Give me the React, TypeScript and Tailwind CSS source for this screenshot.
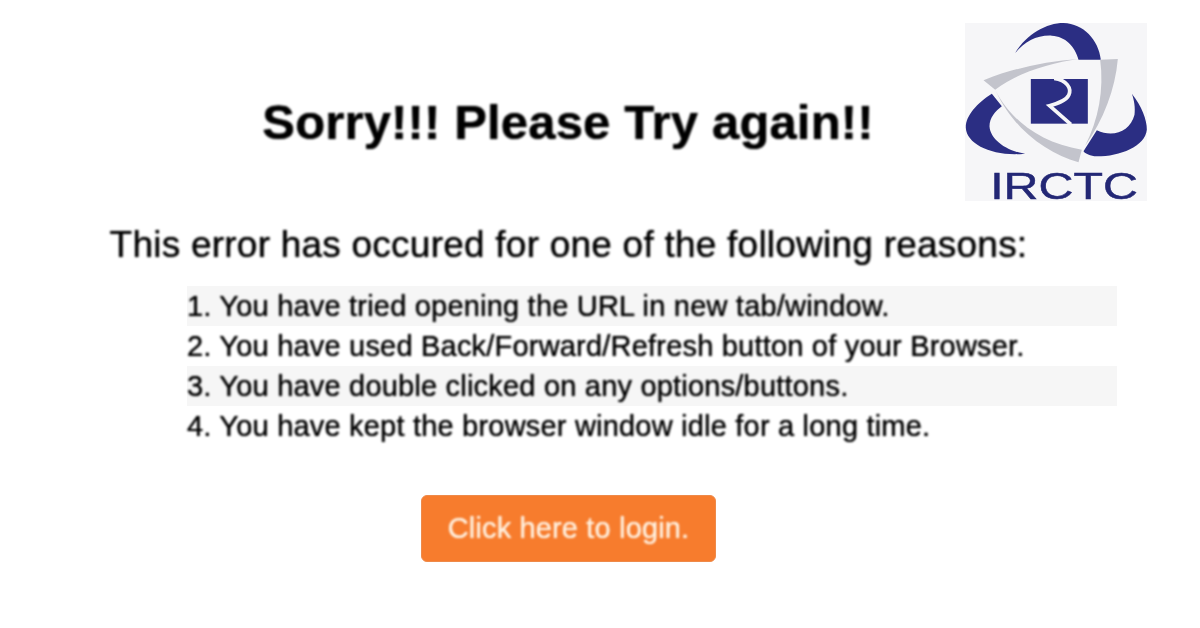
const reasons = [
  "You have tried opening the URL in new tab/window.",
  "You have used Back/Forward/Refresh button of your Browser.",
  "You have double clicked on any options/buttons.",
  "You have kept the browser window idle for a long time.",
];

function IrctcLogo() {
  return (
    <div className="absolute left-[965px] top-[23px] h-[178px] w-[182px] bg-[#f6f6f8]">
      <svg viewBox="45 40 545 534" className="h-[178px] w-[182px] overflow-visible blur-[0.4px]">
        <path d="M195 130C230 72 290 40 340 40C400 42 445 90 452 150L385 150C375 110 345 80 305 78C260 76 225 95 195 130Z" fill="#2b2e83" />
        <path d="M125 252C80 280 45 320 47 355C50 405 130 442 225 432C170 425 120 390 118 350C118 325 135 305 155 290Z" fill="#2b2e83" />
        <path d="M545 252C575 290 590 330 590 360C585 410 510 440 440 440C420 440 405 432 400 425L440 362C490 385 540 365 553 315C556 295 552 270 545 252Z" fill="#2b2e83" />
        <path d="M100 212C190 175 290 155 385 148C300 160 200 190 135 240Z" fill="#c3c4cc" />
        <path d="M450 150L503 148C495 240 460 330 405 408C445 330 462 240 450 150Z" fill="#c3c4cc" />
        <path d="M135 240C180 330 270 400 395 420L385 458C290 430 190 360 135 240Z" fill="#c3c4cc" />
        <rect x="242" y="208" width="171" height="134" fill="#2b2e83" />
        <path d="M312 206C350 212 365 235 356 256C348 274 320 282 298 288L362 344" fill="none" stroke="#f6f6f8" strokeWidth="11" />
        <text x="120" y="568" textLength="443" lengthAdjust="spacingAndGlyphs" fontSize="113" fill="#232775" stroke="#232775" strokeWidth="1.5" className="font-['Liberation_Sans',sans-serif]">IRCTC</text>
      </svg>
    </div>
  );
}

export default function App() {
  return (
    <div className="relative h-[628px] w-[1200px] overflow-hidden bg-white font-['Liberation_Sans',Arial,sans-serif] text-black">
      <div className="flex flex-col items-start">
        <h1 className="mt-[94px] h-[56px] w-[1136px] text-center text-[49px] font-bold leading-[56px] tracking-[0.15px] blur-[0.8px] [text-shadow:0_0_1px_#000]">
          Sorry!!! Please Try again!!
        </h1>
        <p className="mt-[73px] w-[1137px] text-center text-[37px] leading-[44px] tracking-[0.23px] blur-[0.8px] [text-shadow:0_0_1px_#000]">
          This error has occured for one of the following reasons:
        </p>
        <ol className="mt-[19px] ml-[187px] w-[930px] text-[29px] leading-[40px] tracking-[0.2px]">
          {reasons.map((reason, i) => (
            <li key={reason} className={i % 2 === 0 ? "bg-[#f6f6f6]" : ""}>
              <span className="block blur-[0.8px] [text-shadow:0_0_1px_#000]">{i + 1}. {reason}</span>
            </li>
          ))}
        </ol>
        <button className="mt-[49px] ml-[421px] h-[67px] w-[295px] rounded-[6px] border border-[#ee8a4a] bg-[#f77c2d] text-[29px] tracking-[0.15px] text-[#fff2e2]">
          <span className="block blur-[0.8px] [text-shadow:0_0_1px_#fff2e2]">Click here to login.</span>
        </button>
      </div>
      <IrctcLogo />
    </div>
  );
}
